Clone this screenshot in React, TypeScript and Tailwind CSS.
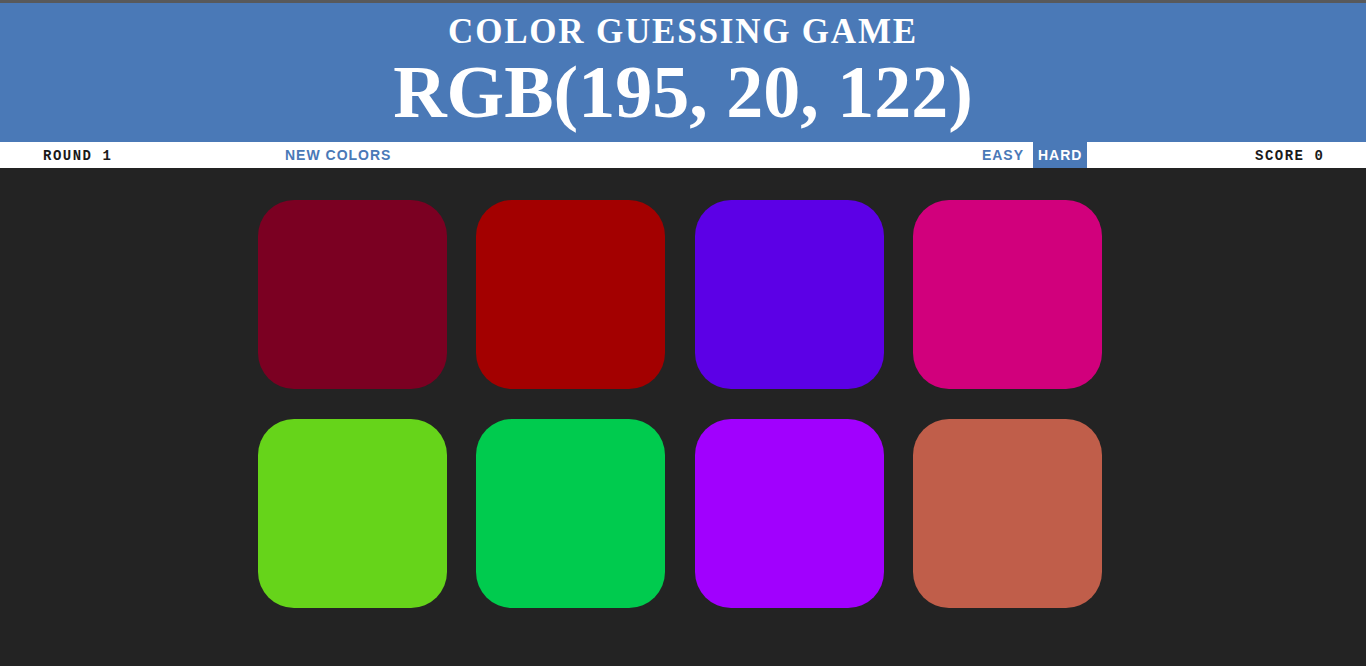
import React from 'react';

const colors = [
  '#7b0022',
  '#a30000',
  '#5c00e6',
  '#d1007c',
  '#66d41a',
  '#00cb4e',
  '#a100fe',
  '#c05e4a',
];

export default function App() {
  return (
    <div className="min-h-[666px] bg-[#232323] border-t-[3px] border-[#58595b]">
      <header className="bg-[#4a79b7] h-[139px] flex flex-col items-center text-white font-['Liberation_Serif',serif] font-bold">
        <h1 className="text-[35px] leading-none tracking-[1.8px] mt-[11px]">COLOR GUESSING GAME</h1>
        <h2 className="text-[74px] leading-none mt-[6px]">RGB(195, 20, 122)</h2>
      </header>

      <div className="bg-white h-[26px] flex items-center text-[14px] font-bold">
        <span className="pl-[43px] w-[285px] pt-[2px] font-['Liberation_Mono',monospace] tracking-[1.5px] text-[#1a1a1a]">
          ROUND 1
        </span>
        <button className="font-['Liberation_Sans',sans-serif] tracking-[1px] text-[#4a79b7]">NEW COLORS</button>
        <div className="flex-1" />
        <button className="h-[26px] px-[9px] font-['Liberation_Sans',sans-serif] tracking-[1px] text-[#4a79b7]">EASY</button>
        <button className="h-[26px] px-[5px] w-[54px] bg-[#4a79b7] font-['Liberation_Sans',sans-serif] tracking-[1px] text-white">HARD</button>
        <span className="ml-[168px] w-[111px] pt-[2px] font-['Liberation_Mono',monospace] tracking-[1.5px] text-[#1a1a1a]">
          SCORE 0
        </span>
      </div>

      <main className="pt-[32px] flex justify-center">
        <div className="grid grid-cols-4 gap-x-[29.5px] gap-y-[30px] ml-[-6px]">
          {colors.map((c) => (
            <div key={c} className="w-[189px] h-[189px] rounded-[36px]" style={{ backgroundColor: c }} />
          ))}
        </div>
      </main>
    </div>
  );
}
